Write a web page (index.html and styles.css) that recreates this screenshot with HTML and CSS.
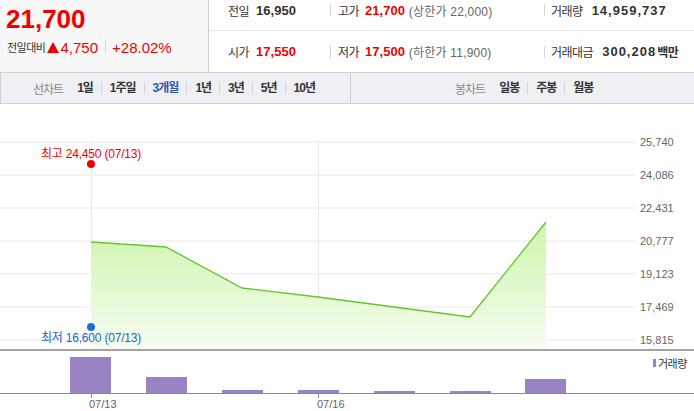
FILE: index.html
```html
<!DOCTYPE html>
<html lang="ko">

<head>
    <meta charset="UTF-8">
    <meta name="viewport" content="width=device-width, initial-scale=1.0">
    <title>시세 차트</title>
    <link rel="stylesheet" href="styles.css">
</head>

<body>
    <div class="summary">
        <div class="now">
            <div class="now-price">21,700</div>
            <div class="now-change">
                <span class="change-label">전일대비</span>
                <span class="up-arrow"></span>
                <span class="change-num">4,750</span>
                <span class="bar"></span>
                <span class="change-num">+28.02%</span>
            </div>
        </div>
        <div class="quote">
            <div class="row first">
                <div class="cell c1"><span class="lb">전일</span><span class="val">16,950</span></div>
                <div class="cell c2"><span class="bar"></span><span class="lb">고가</span><span class="val red">21,700</span><span class="sub">(상한가 22,000)</span></div>
                <div class="cell c3"><span class="bar"></span><span class="lb">거래량</span><span class="val wide">14,959,737</span></div>
            </div>
            <div class="row">
                <div class="cell c1"><span class="lb">시가</span><span class="val red">17,550</span></div>
                <div class="cell c2"><span class="bar"></span><span class="lb">저가</span><span class="val red">17,500</span><span class="sub">(하한가 11,900)</span></div>
                <div class="cell c3"><span class="bar"></span><span class="lb">거래대금</span><span class="val wide">300,208</span><span class="unit">백만</span></div>
            </div>
        </div>
    </div>

    <div class="tabs">
        <div class="tab-group line">
            <span class="tab-title">선차트</span>
            <a href="javascript:;" class="tab">1일</a>
            <a href="javascript:;" class="tab">1주일</a>
            <a href="javascript:;" class="tab on">3개월</a>
            <a href="javascript:;" class="tab">1년</a>
            <a href="javascript:;" class="tab">3년</a>
            <a href="javascript:;" class="tab">5년</a>
            <a href="javascript:;" class="tab">10년</a>
        </div>
        <div class="tab-group candle">
            <span class="tab-title">봉차트</span>
            <a href="javascript:;" class="tab">일봉</a>
            <a href="javascript:;" class="tab">주봉</a>
            <a href="javascript:;" class="tab">월봉</a>
        </div>
    </div>

    <svg class="chart" width="694" height="307" viewBox="0 0 694 307">
        <defs>
            <linearGradient id="fill" x1="0" y1="118" x2="0" y2="245" gradientUnits="userSpaceOnUse">
                <stop offset="0" stop-color="#cdf5ab" />
                <stop offset="1" stop-color="#f7fdf2" />
            </linearGradient>
        </defs>
        <!-- grid -->
        <g class="grid">
            <line x1="0" y1="38" x2="635" y2="38" />
            <line x1="0" y1="71" x2="635" y2="71" />
            <line x1="0" y1="104" x2="635" y2="104" />
            <line x1="0" y1="137" x2="635" y2="137" />
            <line x1="0" y1="170" x2="635" y2="170" />
            <line x1="0" y1="203" x2="635" y2="203" />
            <line x1="0" y1="236" x2="635" y2="236" />
            <line x1="91.5" y1="38" x2="91.5" y2="245" />
            <line x1="318.5" y1="38" x2="318.5" y2="245" />
        </g>
        <g class="axis">
            <text x="640" y="42">25,740</text>
            <text x="640" y="75">24,086</text>
            <text x="640" y="108">22,431</text>
            <text x="640" y="141">20,777</text>
            <text x="640" y="174">19,123</text>
            <text x="640" y="207">17,469</text>
            <text x="640" y="240">15,815</text>
        </g>
        <!-- price -->
        <path class="area" d="M91 138 L166 143 L242 184 L318 193 L394 203 L470 213 L546 118 L546 245 L91 245 Z" />
        <path class="price" d="M91 138 L166 143 L242 184 L318 193 L394 203 L470 213 L546 118" />
        <text class="hi" x="91" y="54">최고 24,450 (07/13)</text>
        <circle cx="91" cy="60" r="4" fill="#f20000" />
        <circle cx="91" cy="223" r="4" fill="#1c6ee0" />
        <text class="lo" x="91" y="238">최저 16,600 (07/13)</text>
        <!-- volume -->
        <line class="split" x1="0" y1="246" x2="694" y2="246" />
        <g class="vol">
            <rect x="70" y="253" width="41" height="36" />
            <rect x="146" y="273" width="41" height="16" />
            <rect x="222" y="286" width="41" height="3" />
            <rect x="298" y="286" width="41" height="3" />
            <rect x="374" y="287" width="41" height="2" />
            <rect x="450" y="287" width="41" height="2" />
            <rect x="525" y="275" width="41" height="14" />
        </g>
        <line class="base" x1="0" y1="289.5" x2="694" y2="289.5" />
        <line class="base" x1="91.5" y1="289" x2="91.5" y2="294" />
        <line class="base" x1="318.5" y1="289" x2="318.5" y2="294" />
        <g class="axis">
            <text x="89" y="304">07/13</text>
            <text x="317" y="304">07/16</text>
        </g>
        <rect x="653" y="255" width="3" height="8" fill="#9883c3" />
        <text class="legend" x="658" y="264">거래량</text>
    </svg>
</body>

</html>
```

FILE: styles.css
```css
* {
    margin: 0;
    padding: 0;
    box-sizing: border-box;
    text-decoration: none;
}

body {
    width: 694px;
    height: 411px;
    overflow: hidden;
    background: #fff;
    color: #333;
    font-family: "Liberation Sans", "Noto Sans CJK KR", sans-serif;
}

/* summary */
.summary {
    display: flex;
    height: 72px;
}

.now {
    width: 209px;
    padding: 4px 0 0 6px;
    background: #f8f8f8;
    border-right: 1px solid #ccc;
}

.now-price {
    font-size: 26px;
    font-weight: bold;
    line-height: 30px;
    color: #f20000;
}

.now-change {
    display: flex;
    align-items: center;
    height: 18px;
    margin-top: 4px;
    padding-left: 1px;
}

.change-label {
    font-size: 11px;
    letter-spacing: -0.5px;
    color: #333;
}

.up-arrow {
    width: 0;
    height: 0;
    margin: 0 1px 0 2px;
    border-left: 6px solid transparent;
    border-right: 6px solid transparent;
    border-bottom: 11px solid #f20000;
}

.change-num {
    font-size: 15px;
    color: #f20000;
}

.now-change .bar {
    margin: 0 6px 0 7px;
}

.bar {
    width: 1px;
    height: 12px;
    background: #d5d5d5;
}

.quote {
    flex: 1;
}

.row {
    display: grid;
    grid-template-columns: 102px 214px auto;
    align-items: center;
    height: 41px;
    padding-left: 19px;
}

.row.first {
    height: 31px;
    padding-bottom: 10px;
    border-bottom: 1px solid #e6e6e6;
}

.cell {
    display: flex;
    align-items: center;
    white-space: nowrap;
}

.lb {
    font-size: 12px;
    letter-spacing: -0.5px;
    color: #333;
}

.val {
    margin-left: 7px;
    font-size: 13px;
    font-weight: bold;
    color: #333;
}

.val.red {
    color: #f20000;
}

.val.wide {
    margin-left: 9px;
    letter-spacing: 1px;
}

.c2 .bar {
    margin-right: 7px;
}

.c2 .val {
    margin-left: 6px;
}

.c3 .bar {
    margin-right: 6px;
}

.sub {
    margin-left: 4px;
    font-size: 12px;
    letter-spacing: 0.2px;
    color: #666;
}

.unit {
    margin-left: 1px;
    font-size: 12px;
    font-weight: bold;
    letter-spacing: -0.5px;
}

/* tabs */
.tabs {
    display: flex;
    height: 32px;
    background: #eff0f4;
    border-top: 1px solid #cfcfcf;
    border-bottom: 1px solid #cfcfcf;
    border-left: 1px solid #cfcfcf;
}

.tab-group {
    display: flex;
    align-items: center;
}

.tab-group.line {
    width: 350px;
    padding-left: 32px;
    border-right: 1px solid #cfcfcf;
}

.tab-group.candle {
    flex: 1;
    padding-left: 104px;
}

.tab-title {
    margin-right: 6px;
    font-size: 12px;
    letter-spacing: -1px;
    color: #888;
}

.tab {
    padding: 0 8px;
    font-size: 12px;
    font-weight: bold;
    letter-spacing: -1px;
    line-height: 12px;
    color: #333;
    border-left: 1px solid #d5d5d5;
}

.tab-title + .tab {
    border-left: 0;
}

.tab.on {
    color: #3355aa;
}

/* chart */
.chart {
    display: block;
}

.grid line {
    stroke: #e8e8e8;
    stroke-width: 1;
}

.axis text {
    font-family: "Liberation Sans", sans-serif;
    font-size: 11px;
    fill: #666;
}

.area {
    fill: url(#fill);
}

.price {
    fill: none;
    stroke: #62c62e;
    stroke-width: 1.3;
}

.hi,
.lo {
    font-size: 12px;
    letter-spacing: -0.2px;
    text-anchor: middle;
}

.hi {
    fill: #f20000;
}

.lo {
    fill: #1c63c8;
}

.split {
    stroke: #858585;
    stroke-width: 1.5;
}

.base {
    stroke: #8a8a8a;
    stroke-width: 1;
}

.vol rect {
    fill: #9883c3;
}

.legend {
    font-size: 11px;
    letter-spacing: -0.5px;
    fill: #333;
}
```
